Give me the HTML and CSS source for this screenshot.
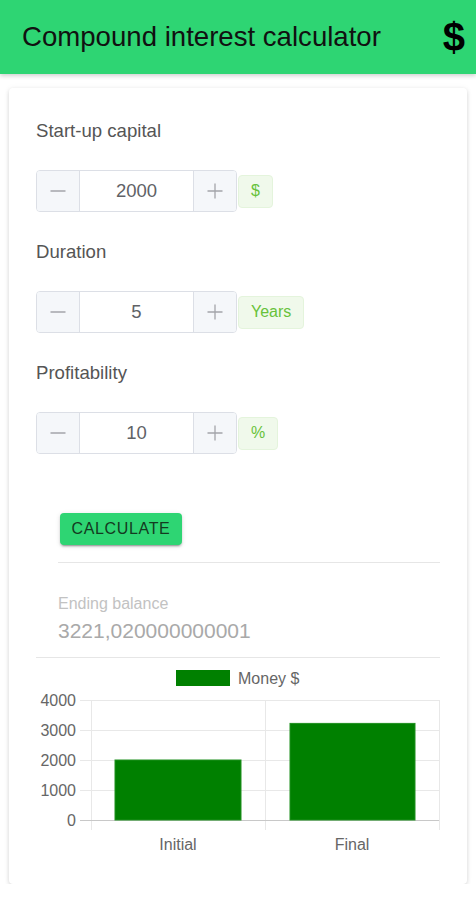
FILE: index.html
```html
<!DOCTYPE html>
<html lang="en">
<head>
<meta charset="utf-8">
<title>Compound interest calculator</title>
<link rel="stylesheet" href="styles.css">
</head>
<body>
<header class="topbar">
  <h1 class="title">Compound interest calculator</h1>
  <span class="logo">$</span>
</header>
<main class="page">
  <section class="card">
    <div class="field">
      <label class="field-label">Start-up capital</label>
      <div class="field-row">
        <div class="stepper">
          <span class="step step-minus"><svg width="16" height="16" viewBox="0 0 16 16"><line x1="0.5" y1="8" x2="15.5" y2="8"/></svg></span>
          <span class="step-value">2000</span>
          <span class="step step-plus"><svg width="16" height="16" viewBox="0 0 16 16"><line x1="0.5" y1="8" x2="15.5" y2="8"/><line x1="8" y1="0.5" x2="8" y2="15.5"/></svg></span>
        </div>
        <span class="tag">$</span>
      </div>
    </div>
    <div class="field">
      <label class="field-label">Duration</label>
      <div class="field-row">
        <div class="stepper">
          <span class="step step-minus"><svg width="16" height="16" viewBox="0 0 16 16"><line x1="0.5" y1="8" x2="15.5" y2="8"/></svg></span>
          <span class="step-value">5</span>
          <span class="step step-plus"><svg width="16" height="16" viewBox="0 0 16 16"><line x1="0.5" y1="8" x2="15.5" y2="8"/><line x1="8" y1="0.5" x2="8" y2="15.5"/></svg></span>
        </div>
        <span class="tag">Years</span>
      </div>
    </div>
    <div class="field">
      <label class="field-label">Profitability</label>
      <div class="field-row">
        <div class="stepper">
          <span class="step step-minus"><svg width="16" height="16" viewBox="0 0 16 16"><line x1="0.5" y1="8" x2="15.5" y2="8"/></svg></span>
          <span class="step-value">10</span>
          <span class="step step-plus"><svg width="16" height="16" viewBox="0 0 16 16"><line x1="0.5" y1="8" x2="15.5" y2="8"/><line x1="8" y1="0.5" x2="8" y2="15.5"/></svg></span>
        </div>
        <span class="tag">%</span>
      </div>
    </div>

    <div class="result">
      <button class="calc-btn" type="button">Calculate</button>
      <hr class="divider">
      <div class="result-label">Ending balance</div>
      <div class="result-value">3221,020000000001</div>
    </div>
    <hr class="divider">

    <svg class="chart" width="404" height="198" viewBox="0 0 404 198">
      <rect x="140" y="8" width="54" height="16" fill="#008000"/>
      <text x="202" y="22" class="chart-text">Money $</text>

      <g class="grid">
        <line x1="44" y1="38.5" x2="403" y2="38.5"/>
        <line x1="44" y1="68.5" x2="403" y2="68.5"/>
        <line x1="44" y1="98.5" x2="403" y2="98.5"/>
        <line x1="44" y1="128.5" x2="403" y2="128.5"/>
        <line x1="55.5" y1="38" x2="55.5" y2="168"/>
        <line x1="229.5" y1="38" x2="229.5" y2="168"/>
        <line x1="403.5" y1="38" x2="403.5" y2="168"/>
      </g>
      <line class="zero" x1="44" y1="158.5" x2="403" y2="158.5"/>

      <g class="chart-text" text-anchor="end">
        <text x="40" y="44">4000</text>
        <text x="40" y="74">3000</text>
        <text x="40" y="104">2000</text>
        <text x="40" y="134">1000</text>
        <text x="40" y="164">0</text>
      </g>

      <rect x="79" y="98" width="126" height="60" fill="#008000" stroke="#1f8f1f" stroke-width="1"/>
      <rect x="254" y="61.4" width="125" height="96.6" fill="#008000" stroke="#1f8f1f" stroke-width="1"/>

      <g class="chart-text" text-anchor="middle">
        <text x="142" y="188">Initial</text>
        <text x="316" y="188">Final</text>
      </g>
    </svg>
  </section>
</main>
</body>
</html>
```

FILE: styles.css
```css
* {
  box-sizing: border-box;
}

html, body {
  margin: 0;
  padding: 0;
  background: #ffffff;
  font-family: "Liberation Sans", Arial, sans-serif;
}

.topbar {
  height: 74px;
  background: #2ed573;
  display: flex;
  align-items: center;
  justify-content: space-between;
  padding: 0 11px 0 22px;
  box-shadow: 0 2px 4px rgba(0, 0, 0, 0.18);
  position: relative;
  z-index: 1;
}

.title {
  margin: 0;
  font-size: 27.6px;
  font-weight: normal;
  color: #111;
  line-height: 1;
}

.logo {
  font-size: 40px;
  font-weight: bold;
  color: #000;
  line-height: 1;
}

.page {
  padding: 14px 9px 0;
}

.card {
  background: #fff;
  border-radius: 4px;
  box-shadow: 0 2px 4px rgba(0, 0, 0, 0.14), 0 0 6px rgba(0, 0, 0, 0.05);
  padding: 23px 27px 24px;
  display: flex;
  flex-direction: column;
}

.field {
  display: flex;
  flex-direction: column;
  margin-bottom: 20px;
}

.field-label {
  font-size: 18.6px;
  line-height: 40px;
  height: 40px;
  color: #555;
  margin-bottom: 19px;
}

.field-row {
  display: flex;
  align-items: center;
}

.stepper {
  display: flex;
  height: 42px;
  width: 201px;
  border: 1px solid #dcdfe6;
  border-radius: 4px;
  overflow: hidden;
}

.step {
  width: 43px;
  background: #f5f7fa;
  display: flex;
  align-items: center;
  justify-content: center;
}

.step svg line {
  stroke: #a3a5aa;
  stroke-width: 1.3;
}

.step-minus {
  border-right: 1px solid #dcdfe6;
}

.step-plus {
  border-left: 1px solid #dcdfe6;
}

.step-value {
  flex: 1;
  display: flex;
  align-items: center;
  justify-content: center;
  font-size: 18.5px;
  color: #606266;
  background: #fff;
}

.tag {
  margin-left: 1px;
  height: 33px;
  padding: 0 12px;
  display: flex;
  align-items: center;
  background: #f0f9eb;
  border: 1px solid #e4f4dc;
  border-radius: 4px;
  color: #67c23a;
  font-size: 16px;
}

.result {
  padding: 39px 0 0 22px;
  display: flex;
  flex-direction: column;
  align-items: flex-start;
}

.calc-btn {
  margin-left: 2px;
  width: 122px;
  height: 32px;
  border: none;
  border-radius: 4px;
  background: #2ed573;
  color: #143a21;
  font-family: "Liberation Sans", Arial, sans-serif;
  font-size: 16px;
  letter-spacing: 0.65px;
  text-transform: uppercase;
  padding: 0;
  box-shadow: 0 3px 1px -2px rgba(0, 0, 0, 0.2), 0 2px 2px 0 rgba(0, 0, 0, 0.14), 0 1px 5px 0 rgba(0, 0, 0, 0.12);
}

.divider {
  align-self: stretch;
  width: 100%;
  border: none;
  border-top: 1px solid #e6e6e6;
  margin: 0;
}

.result .divider {
  margin-top: 17px;
}

.result-label {
  margin-top: 31px;
  font-size: 16px;
  line-height: 20px;
  color: #c2c2c2;
}

.result-value {
  margin-top: 4px;
  font-size: 21px;
  line-height: 26px;
  color: #a9a9a9;
  margin-bottom: 13px;
}

.chart {
  display: block;
  margin-top: 4px;
}

.chart .grid line {
  stroke: #e8e8e8;
  stroke-width: 1;
}

.chart .zero {
  stroke: #c8c8c8;
  stroke-width: 1;
}

.chart-text {
  font-family: "Liberation Sans", Arial, sans-serif;
  font-size: 16px;
  fill: #666;
}
```
